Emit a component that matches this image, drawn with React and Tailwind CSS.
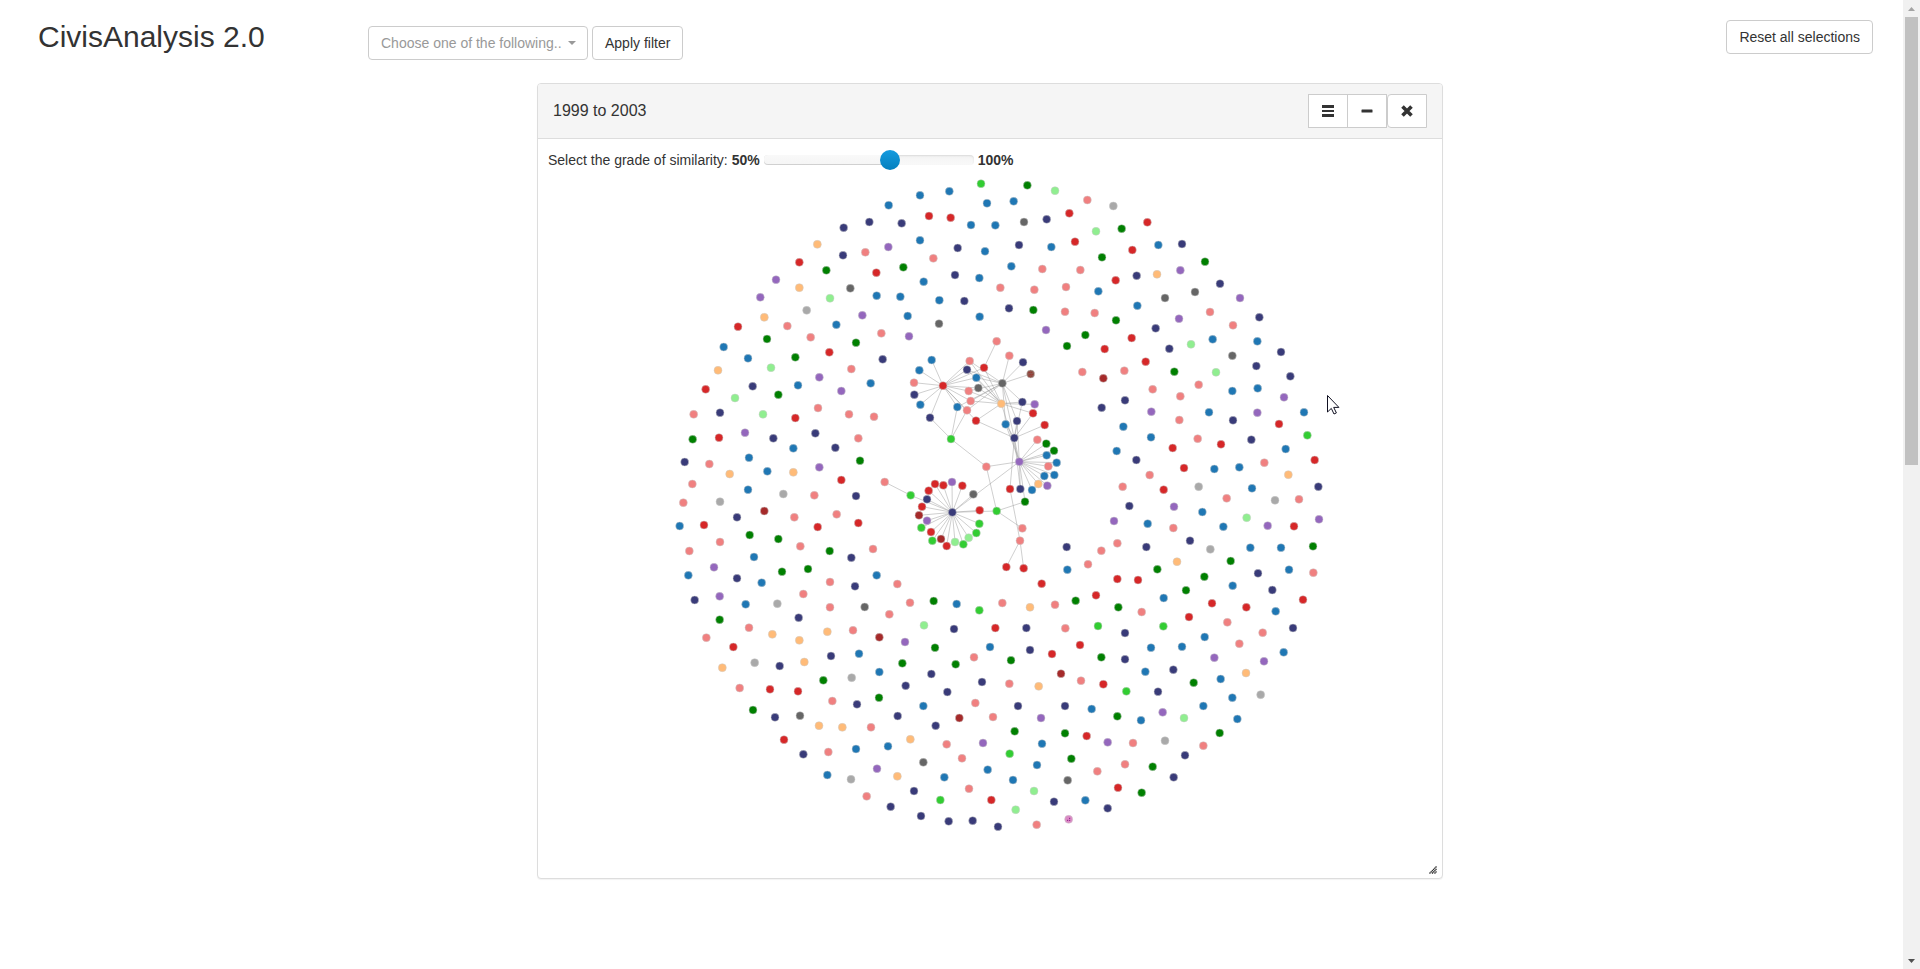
import React, { useState } from "react";

const COLORS = {
  B: "#1f77b4",
  N: "#393b79",
  R: "#d62728",
  P: "#f08080",
  G: "#008000",
  L: "#90ee90",
  M: "#32cd32",
  V: "#9467bd",
  K: "#666666",
  A: "#a9a9a9",
  O: "#ffbb78",
  W: "#a52a2a",
  T: "#8c564b",
  X: "#da8ac4",
};

// Node positions, three units to a pixel, relative to each region's origin.
const REGIONS = [
  {
    x: 132,
    y: -4,
    nodes:
      "656,106B 598,156N 521,173N 442,223O 586,247P 519,256N 655,231V 388,277R 469,301G 619,308R 318,329V 388,353O 541,355K 620,377B 271,382V 480,385L 410,421A 577,436V 283,442O 352,468P 499,464B 204,470R 422,502P 634,490P 291,507G 558,518G 161,531B 478,547R 376,562G 234,565B 638,568N 144,601O 303,593L 544,597P 448,622V 602,640B 384,646B 248,649N 107,658R 514,663V",
  },
  {
    x: 352,
    y: -4,
    nodes:
      "273,41M 412,46G 495,62L 90,76B 178,64B 592,90P 291,100B 371,94B 117,138R 182,143R 538,130R 35,160N 243,165B 316,166B 402,156K 470,148N 618,184L 90,211B 555,215R 203,234N 387,225N 285,244B 484,231B 130,265P 636,262G 40,292G 364,289B 457,297P 571,300P 195,315N 268,324B 101,335B 331,353P 433,359P 528,351P 625,364B 31,380B 148,391B 223,393N 357,415N 430,420G 525,425P 614,429P 53,438B 269,440B 147,461K 468,480V 57,499V 586,495G 531,528G 644,537R 577,606P 640,625W",
  },
  {
    x: 572,
    y: -4,
    nodes:
      "10,108A 112,157R 35,176G 67,240R 145,225B 216,222N 285,275G 211,301V 80,317N 141,313O 17,331R 330,341N 255,366K 165,384K 390,384V 82,407B 300,426P 207,446V 448,442N 18,451G 369,466P 137,475N 65,504R 308,508B 442,514B 243,523L 178,536N 513,546N 367,557K 107,575R 439,588N 43,602P 193,605G 318,607L 541,619N 266,644P 128,658P 443,655B 367,663B 211,679P 522,682V 45,691N 124,725V 297,727B 582,727B 442,728V 208,750P 369,751N 507,762R 40,770B -25,713N",
  },
  {
    x: 132,
    y: 216,
    nodes:
      "195,24L 325,14G 71,73P 150,68N 279,73L 376,84R 444,54P 537,73P 612,80P 225,128V 147,143R 310,145N 436,130N 565,145P 68,148G 370,175B 496,173N 237,203B 44,216N 118,222P 570,212G 292,244B 179,252O 370,247O 448,232V 67,282P 514,270R 644,276P 234,299B 340,312A 433,316P 558,318N 40,338P 150,335A 283,363W 373,382P 500,373P 201,382N 29,408B 102,405R 443,411R 565,399R 239,435G 325,447G 150,456P 391,469P 58,483P 479,483G 544,503N 609,477P 252,501B 132,532V 336,545G 414,537G 55,556B 620,556B 201,565N 275,578B 480,576P 555,589N 400,612P 74,630N 149,619V 227,643B 322,641A 480,652P 584,651K",
  },
  {
    x: 132,
    y: 426,
    nodes:
      "682,-48P 658,43P 720,8P 791,3G 149,59G 386,53N 237,83P 109,113P 307,103O 388,121O 472,95O 549,91P 628,112W 762,76L 705,126V 190,141R 567,161B 483,168N 795,143G 254,188A 329,198N 403,186O 697,190G 157,203O 628,216B 784,222N 460,241G 545,233A 707,257N 209,264P 300,268R 384,274R 832,276N 487,303P 627,293G 561,313N 760,318B 249,330G 390,347K 315,352N 683,348N 447,377O 517,382O 797,377N 603,382P 342,419R 654,439B 721,418O 830,433P 400,463N 475,456P 558,447B 760,487K 621,506V 472,525B 543,538A 682,529O 823,532B 590,589P 732,573N 811,600M 662,620N 753,648N 836,664N",
  },
  {
    x: 412,
    y: 396,
    nodes:
      "20,102B 88,121M 157,99P 240,112O 315,104P 275,41R 12,177N 136,174R 229,174N 346,175P 120,231B 240,240N 306,252R 72,262P 17,283G 183,271G 333,311W 96,336N 178,341P 266,349O 393,332P 460,343R 529,364M 624,365N 586,305B 670,299N 731,338G 812,327B 888,309O 932,374A 847,383B 76,399P 204,408N 345,408N 425,417B 760,408B 28,444W 129,441P 273,444V 502,439G 573,451B 638,427V 702,444L 862,447B 194,484G 345,490G 410,498R 99,519V 276,521B 473,517V 549,519P 645,512A 809,489G 760,527P 36,565P 179,551M 261,585B 364,566G 705,556N 113,599B 189,630B 353,631K 442,604P 525,583P 608,590G 671,622N 57,656P 252,663L 504,653R 575,668G 124,690R 197,719L 312,695N 406,691B 473,715N 356,748X 68,752N 144,770N 260,764P",
  },
  {
    x: 532,
    y: 256,
    nodes:
      "243,22B 383,26P 712,16M 453,43R 544,29N 308,54R 140,63B 647,57B 734,90R 199,90N 583,98P 342,114R 433,117B 508,112B 655,134O 239,135P 158,170P 281,179R 386,170A 546,175B 745,170N 470,205P 615,211A 687,208P 178,228N 312,230V 132,273V 397,246B 530,263L 747,268V 233,281B 310,294P 460,290B 593,287V 672,289R 360,332N 142,340P 229,351N 421,358A 541,353B 633,353B 729,349G 94,362P 54,403P 321,395O 482,393G 262,418G 657,419B 730,428P 403,440G 564,430N 142,447R 204,450R 348,481G 488,467B 607,480N 78,496R 17,512G 281,504B 426,520R 699,509R 145,532G 529,532R 617,544B 215,546P 357,561R 472,577P 84,588M 280,589M 669,594N 165,609N 578,608P 30,645R 404,621B 508,641P 243,653B 336,650B 641,667B 94,682G 165,688N 433,683V 582,694V",
  },
  {
    x: 352,
    y: 146,
    nodes:
      "320,64P 358,107P 399,127N 422,162T 282,143R 239,123P 231,149N 259,173B 265,204K 236,213P 242,243P 231,271P 258,302R 202,261B 159,197R 337,190K 334,251O 125,120B 88,151B 72,188P 73,224N 91,254B 120,293N 183,357M 289,440P 397,246N 434,253V 429,280R 381,303N 347,313B 464,315R 373,354N 388,425V 442,359P 469,371G 492,392G 470,406B 500,428B 475,439P 463,468B 493,465B 445,492O 472,497V 426,510B 360,507R 391,507N 405,545G 320,573M 397,625P 390,662P 349,741R 401,745R 187,577N 186,486V 217,497R 160,496R 135,492R 116,512R 111,538N 62,526M 96,560R 87,586W 111,602V 94,623M 123,636R 127,662M 153,657W 170,678R 195,666L 220,673M 236,653L 259,639M 268,611M 269,571R 250,523K 530,681N 532,749B",
  },
];

// Links of the connected component: one hub, then the nodes it reaches.
const LINKS = [
  "159,197 125,120 88,151 72,188 73,224 91,254 120,293 202,261 231,271 242,243 236,213 265,204 259,173 231,149 239,123 282,143 258,302",
  "337,190 358,107 399,127 422,162 397,246 239,123 231,149 259,173 236,213 242,243 231,271 202,261 347,313 381,303 388,425",
  "334,251 239,123 231,149 259,173 265,204 236,213 242,243 282,143 397,246 434,253 429,280 258,302 388,425",
  "373,354 258,302 347,313 381,303 397,246 429,280 464,315 360,507 391,507",
  "388,425 442,359 469,371 492,392 470,406 500,428 475,439 463,468 493,465 445,492 472,497 426,510 391,507 405,545 289,440 381,303 347,313 187,577",
  "183,357 120,293 202,261 231,271 289,440",
  "320,573 289,440 187,577 405,545 397,625",
  "390,662 360,507 349,741 401,745",
  "187,577 186,486 217,497 160,496 135,492 116,512 111,538 62,526 96,560 87,586 111,602 94,623 123,636 127,662 153,657 170,678 195,666 220,673 236,653 259,639 268,611 269,571 250,523",
  "282,143 320,64",
  "62,526 -16,486",
];

const NODES = REGIONS.flatMap((region) =>
  region.nodes.split(" ").map((token) => {
    const [x, y] = token.slice(0, -1).split(",").map(Number);
    return { x: region.x + x / 3, y: region.y + y / 3, kind: token.slice(-1) };
  })
);

const EDGES = LINKS.flatMap((line) => {
  const [hub, ...ends] = line.split(" ").map((p) => {
    const [x, y] = p.split(",").map(Number);
    return [352 + x / 3, 146 + y / 3];
  });
  return ends.map((end) => [...hub, ...end]);
});

function DeputiesGraph() {
  return (
    <svg viewBox="0 0 904 704" className="block w-full" role="img" aria-label="Similarity graph, 1999 to 2003">
      <g stroke="#999" strokeOpacity="0.6" strokeWidth="0.8">
        {EDGES.map(([x1, y1, x2, y2], i) => (
          <line key={i} x1={x1} y1={y1} x2={x2} y2={y2} />
        ))}
      </g>
      <g stroke="#ccc" strokeWidth="0.5">
        {NODES.map((n, i) => (
          <circle key={i} cx={n.x} cy={n.y} r="4" fill={COLORS[n.kind]} />
        ))}
      </g>
      {NODES.filter((n) => n.kind === "X").map((n, i) => (
        <path
          key={i}
          d={`M${n.x - 1.5} ${n.y + 1}h1M${n.x + 0.5} ${n.y + 1}h1M${n.x + 0.5} ${n.y - 1}h1`}
          stroke="#800080"
          strokeWidth="1"
        />
      ))}
      {NODES.filter((n) => n.kind === "T").map((n, i) => (
        <path
          key={i}
          d={`M${n.x - 2} ${n.y - 1.5}h1m1 0h1M${n.x - 1} ${n.y + 0.5}h1m1 0h1M${n.x - 2} ${n.y + 2}h1m1 0h1`}
          stroke="#a52a2a"
          strokeWidth="1"
        />
      ))}
      <path
        d="M789.5 221.5v16.5l3.8-3.6 2.7 5.6 2.4-1.1-2.7-5.5h5.2z"
        fill="#fff"
        stroke="#111122"
        strokeWidth="1"
      />
    </svg>
  );
}

const button = "h-[34px] border border-[#ccc] bg-white text-sm text-[#333]";

function SimilaritySlider() {
  const [value, setValue] = useState(80);
  return (
    <div className="flex h-[35px] items-center pt-[6px] pl-[10px] leading-5">
      <label htmlFor="similarity">
        Select the grade of similarity: <b>50%</b>
      </label>
      <div className="relative mx-1 h-[10px] w-[210px] rounded bg-linear-to-b from-[#f3f3f3] to-[#f9f9f9] shadow-[inset_0_1px_2px_rgba(0,0,0,0.1)]">
        <div
          className="h-full rounded-l bg-linear-to-b from-[#f9f9f9] to-[#f5f5f5] shadow-[inset_0_-1px_0_rgba(0,0,0,0.15)]"
          style={{ width: `${(value - 50) * 2}%` }}
        />
        <input
          id="similarity"
          type="range"
          min="50"
          max="100"
          value={value}
          onChange={(e) => setValue(Number(e.target.value))}
          className="absolute -top-[5px] -left-[10px] h-5 w-[230px] cursor-pointer appearance-none bg-transparent [&::-webkit-slider-thumb]:size-5 [&::-webkit-slider-thumb]:appearance-none [&::-webkit-slider-thumb]:rounded-full [&::-webkit-slider-thumb]:bg-linear-to-b [&::-webkit-slider-thumb]:from-[#149bdf] [&::-webkit-slider-thumb]:to-[#0480be]"
        />
      </div>
      <b>100%</b>
    </div>
  );
}

function PeriodPanel() {
  return (
    <section className="relative ml-[537px] w-full max-w-[906px] rounded border border-[#ddd] bg-white shadow-[0_1px_1px_rgba(0,0,0,0.05)]">
      <div className="flex h-[55px] items-center justify-between rounded-t-[3px] border-b border-[#ddd] bg-[#f5f5f5] pr-[15px] pl-[15px]">
        <h2 className="text-base">1999 to 2003</h2>
        <div className="flex">
          <button type="button" aria-label="Menu" className={`${button} flex w-10 items-center justify-center`}>
            <svg viewBox="0 0 12 12" className="size-3" fill="#333">
              <path d="M0 0h12v3H0zM0 5h12v2H0zM0 9h12v3H0z" />
            </svg>
          </button>
          <button type="button" aria-label="Minimize" className={`${button} -ml-px flex w-10 items-center justify-center`}>
            <svg viewBox="0 0 12 12" className="size-3" fill="#333">
              <rect x="0.5" y="4.5" width="11" height="3" rx="0.5" />
            </svg>
          </button>
          <button type="button" aria-label="Close" className={`${button} flex w-10 items-center justify-center rounded-l`}>
            <svg viewBox="0 0 12 12" className="size-3">
              <path d="M1.5 1.5l9 9M10.5 1.5l-9 9" stroke="#333" strokeWidth="3.6" />
            </svg>
          </button>
        </div>
      </div>
      <SimilaritySlider />
      <DeputiesGraph />
      <svg viewBox="0 0 8 8" className="absolute right-[5px] bottom-1 size-2" stroke="#222" strokeWidth="1.2" strokeDasharray="1.400 0.3">
        <path d="M0.5 7.5l7-7M3 7.5l4.5-4.5M5.5 7.5l2-2" />
      </svg>
    </section>
  );
}

function ScrollBar() {
  return (
    <div aria-hidden="true" className="sticky top-0 flex h-screen w-[17px] shrink-0 flex-col items-center bg-[#f1f1f1]">
      <svg viewBox="0 0 17 17" className="size-[17px]">
        <path d="M5 11l3.500-4 3.500 4z" fill="#a3a3a3" />
      </svg>
      <div className="h-[448px] w-[13px] bg-[#c1c1c1]" />
      <svg viewBox="0 0 17 17" className="mt-auto size-[17px]">
        <path d="M5 7l3.500 4 3.500-4z" fill="#505050" />
      </svg>
    </div>
  );
}

export default function App() {
  return (
    <div className="flex min-h-screen bg-white font-['Liberation_Sans',Arial,sans-serif] text-sm text-[#333]">
      <main className="min-w-0 flex-1">
        <header className="flex h-[83px] items-start pr-[30px] pl-[38px]">
          <h1 className="mt-5 w-[330px] text-[30px] leading-[33px]">CivisAnalysis 2.0</h1>
          <div className="mt-[26px] flex gap-1">
            <div className="relative">
              <select
                aria-label="Filter"
                defaultValue=""
                className="h-[34px] w-[220px] appearance-none rounded border border-[#ccc] bg-white px-3 text-sm text-[#999]"
              >
                <option value="">Choose one of the following..</option>
              </select>
              <svg viewBox="0 0 8 4" className="pointer-events-none absolute top-[15px] right-3 h-1 w-2" fill="#999">
                <path d="M0 0h8l-4 4z" />
              </svg>
            </div>
            <button type="button" className={`${button} rounded px-3`}>
              Apply filter
            </button>
          </div>
          <button type="button" className={`${button} mt-5 ml-auto rounded px-3`}>
            Reset all selections
          </button>
        </header>
        <PeriodPanel />
      </main>
      <ScrollBar />
    </div>
  );
}
